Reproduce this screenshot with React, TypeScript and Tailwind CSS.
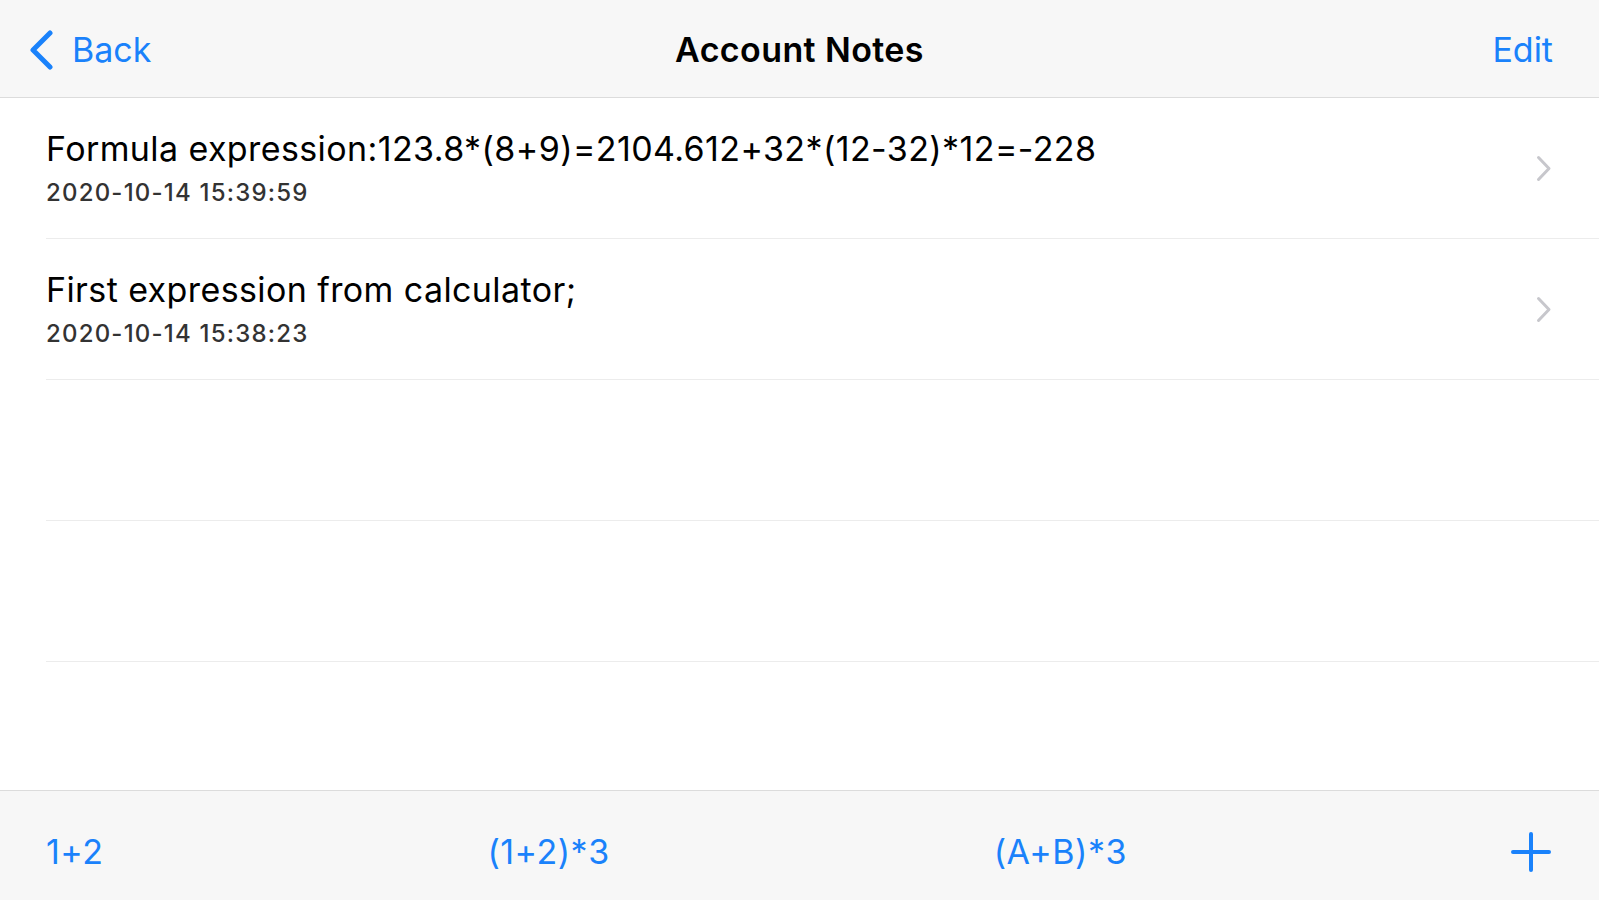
import React from "react";

const notes = [
  { id: "n1", text: "Formula expression:123.8*(8+9)=2104.612+32*(12-32)*12=-228", date: "2020-10-14 15:39:59" },
  { id: "n2", text: "First expression from calculator;", date: "2020-10-14 15:38:23" },
];

const shortcuts = ["1+2", "(1+2)*3", "(A+B)*3"];

function ChevronLeft() {
  return (
    <svg width="26" height="40" viewBox="0 0 26 40" fill="none">
      <path d="M22 3 L5 20 L22 37" stroke="#1a82fb" strokeWidth="5" strokeLinecap="round" strokeLinejoin="round" />
    </svg>
  );
}

function ChevronRight() {
  return (
    <svg width="16" height="27" viewBox="0 0 16 27" fill="none">
      <path d="M2.5 2.5 L13 13.5 L2.5 24.5" stroke="#c7c7cc" strokeWidth="3" strokeLinecap="round" strokeLinejoin="round" />
    </svg>
  );
}

function PlusIcon() {
  return (
    <svg width="40" height="40" viewBox="0 0 40 40" fill="none">
      <path d="M20 2 V38 M2 20 H38" stroke="#1a82fb" strokeWidth="4" strokeLinecap="round" />
    </svg>
  );
}

export default function App() {
  return (
    <div className="h-[900px] w-full flex flex-col bg-white overflow-hidden" style={{ fontFamily: "Inter, 'Liberation Sans', sans-serif" }}>
      {/* Navigation bar */}
      <div className="h-[98px] shrink-0 bg-[#f7f7f7] border-b border-[#dcdcdc] flex items-center justify-between pl-[28px] pr-[46px] pt-[3px] relative">
        <button className="flex items-center gap-[18px] text-[#1a82fb] text-[34px] leading-[40px]">
          <ChevronLeft />
          <span>Back</span>
        </button>
        <h1 className="absolute left-1/2 -translate-x-1/2 text-[34px] leading-[40px] font-semibold tracking-[0.4px] text-black">Account Notes</h1>
        <button className="text-[#1a82fb] text-[34px] leading-[40px]">Edit</button>
      </div>

      {/* Notes list */}
      <div className="flex-1 flex flex-col">
        {notes.map((n) => (
          <div key={n.id} className="h-[141px] shrink-0 flex pl-[46px]">
            <div className="flex-1 flex items-center border-b border-[#ececec] pr-[47px]">
              <div className="flex-1 flex flex-col gap-[10px]">
                <p className="text-[34px] leading-[40px] tracking-[0.4px] text-black">{n.text}</p>
                <p className="text-[24px] leading-[28px] tracking-[1.2px] font-medium text-[#333]">{n.date}</p>
              </div>
              <ChevronRight />
            </div>
          </div>
        ))}
        {[0, 1].map((i) => (
          <div key={i} className="h-[141px] shrink-0 pl-[46px]">
            <div className="h-full border-b border-[#ececec]" />
          </div>
        ))}
      </div>

      {/* Bottom toolbar */}
      <div className="h-[110px] shrink-0 bg-[#f7f7f7] border-t border-[#dcdcdc] flex items-center justify-between pl-[46px] pr-[48px] pt-3">
        {shortcuts.map((s) => (
          <button key={s} className="text-[#1a82fb] text-[34px] leading-[40px] tracking-[0.5px]">{s}</button>
        ))}
        <button><PlusIcon /></button>
      </div>
    </div>
  );
}
